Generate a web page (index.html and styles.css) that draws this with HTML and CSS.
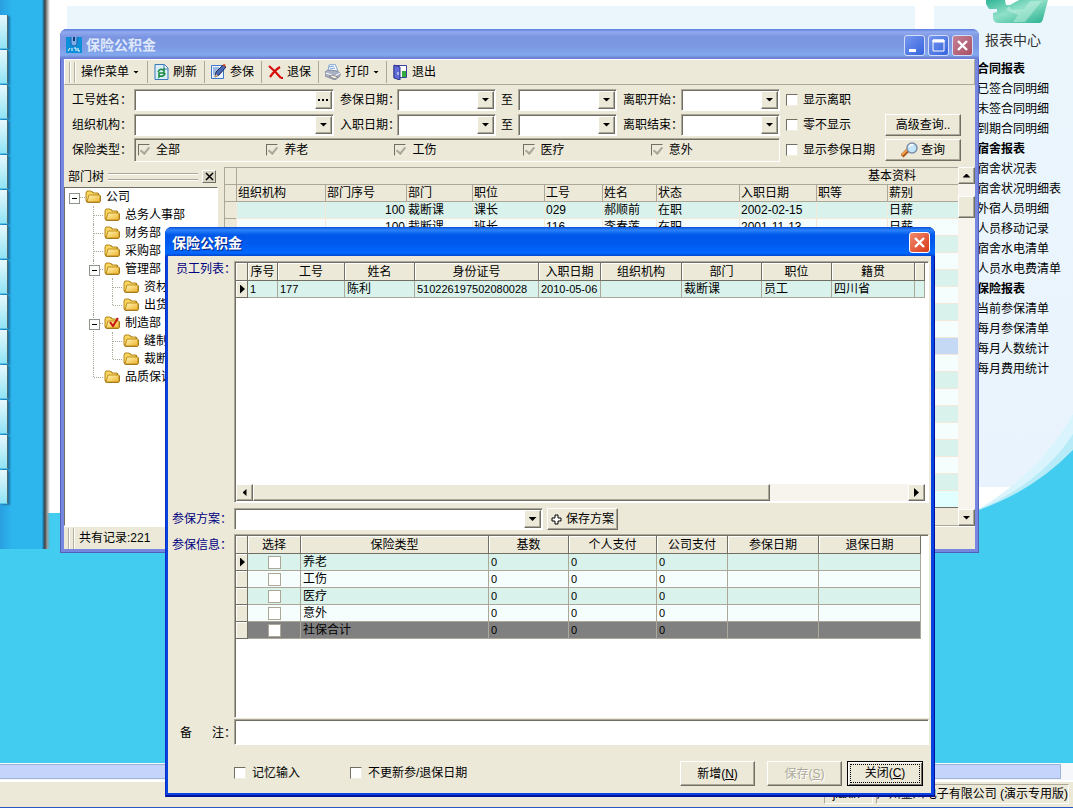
FILE: index.html
```html
<!DOCTYPE html>
<html lang="zh-CN">
<head>
<meta charset="utf-8">
<title>保险公积金</title>
<link rel="stylesheet" href="styles.css">
</head>
<body>
<svg class="defs" aria-hidden="true">
  <defs>
    <linearGradient id="gold" x1="0" y1="0" x2="1" y2="1"><stop offset="0" stop-color="#fff6b8"/><stop offset="1" stop-color="#eeb32c"/></linearGradient>
    <linearGradient id="teal" x1="0" y1="0" x2="1" y2="1"><stop offset="0" stop-color="#2fb596"/><stop offset=".45" stop-color="#8fe0c8"/><stop offset="1" stop-color="#27b08e"/></linearGradient>
    <symbol id="folder" viewBox="0 0 17 14">
      <path d="M1 12V3l2-2h4l2 2h5v2l2 1v5l-2 2H3z" fill="#8a6a1c"/>
      <path d="M1 3l1-2h4l2 2h5v8H1z" fill="#f7d55e" stroke="#b5871c"/>
      <path d="M4 5h11v7H2z" fill="url(#gold)" stroke="#c08d1d"/>
    </symbol>
  </defs>
</svg>
<div class="desktop">
  <main class="workspace">
    <nav class="strip"><i></i><i></i><i></i><i></i><i></i><i></i><i></i><i></i><i></i><i></i><i></i><i></i><i></i><i></i></nav>
    <div class="pane"></div>
    <aside class="reports">
      <svg class="logo" width="66" height="26" viewBox="0 0 66 26"><path d="M1 0h62l-5 19q-1 4-4 4H14q-6 0-6-6v-4l4-1v-3H4L1 4z" fill="url(#teal)"/><path d="M20 0h14l-9 5h-4z" fill="#fff"/><path d="M24 6l3 4 12-1 6-8h12L40 22H28l5-7-12-5z" fill="#c4f1e2" opacity=".5"/></svg>
      <h2>报表中心</h2>
      <ul>
        <li><b>合同报表</b></li><li>已签合同明细</li><li>未签合同明细</li><li>到期合同明细</li>
        <li><b>宿舍报表</b></li><li>宿舍状况表</li><li>宿舍状况明细表</li><li>外宿人员明细</li><li>人员移动记录</li><li>宿舍水电清单</li><li>人员水电费清单</li>
        <li><b>保险报表</b></li><li>当前参保清单</li><li>每月参保清单</li><li>每月人数统计</li><li>每月费用统计</li>
      </ul>
    </aside>
    <svg class="wave" width="100" height="113" viewBox="0 0 100 113"><path d="M0 88h60L0 113z" fill="#fff"/><path d="M100 14Q66 75 0 112h100z" fill="#d9f4fc"/><path d="M100 34Q68 84 0 112h100z" fill="#b8ebf8"/><path d="M100 50Q58 93 0 112v1h100z" fill="#42ccf0"/></svg>
  </main>
  <div class="desk-scroll"><i></i></div>
  <footer class="desk-status"><span class="slot">jiaxin</span><span class="slot company">广州金川电子有限公司 (演示专用版)</span></footer>

  <section class="window">
    <header class="titlebar">
      <svg width="16" height="16" viewBox="0 0 16 16"><path fill="#0b8fd8" d="M0 0h16v16H0z"/><path d="M5 0v6q0 3 3 3t3-3V0" fill="#7eaee6" stroke="#2563b5"/><path d="M7 0h2v4H7z" fill="#123a78"/><path d="M2 14l2-3M6 11v3M8 11h2v3M12 11v3h2" stroke="#fff" fill="none"/></svg>
      <h1>保险公积金</h1>
      <button class="cap" aria-label="最小化"><svg width="19" height="19"><path d="M4 13h7v3H4z" fill="#fff"/></svg></button>
      <button class="cap" aria-label="最大化"><svg width="19" height="19"><path d="M4 4h11v11H4z" fill="none" stroke="#fff"/><path d="M4 4h11v2H4z" fill="#fff" stroke="#fff"/></svg></button>
      <button class="cap shut" aria-label="关闭"><svg width="19" height="19"><path d="M5 5l9 9M14 5l-9 9" stroke="#fff" stroke-width="2.4"/></svg></button>
    </header>
    <div class="toolbar">
      <i class="grip"></i>
      <button class="tool first">操作菜单<i class="tri"></i></button>
      <button class="tool"><svg width="15" height="16" viewBox="0 0 15 16"><path d="M1 .5h9.500l3.500 3.500v11.500H1z" fill="#d9edfb" stroke="#3a78b8"/><path d="M10 1v4h4" fill="#fff" stroke="#3a78b8"/><path d="M4 8q2-4 5-2l1-1v4H7M11 9q-1 4-5 3l-1 1v-4h3" fill="none" stroke="#178a3a" stroke-width="1.500"/></svg>刷新</button>
      <button class="tool"><svg width="15" height="16" viewBox="0 0 15 16"><path d="M.5 1.500h12v13H.5z" fill="#eaf3ff" stroke="#3f77c8"/><path d="M2 4h6M2 6h5M2 8h4M2 10h3" stroke="#4a7cc4"/><path d="M4 13l1-5 7-7 3 2-7 8z" fill="#4a68b4" stroke="#1d2c55"/><path d="M11 1l3-1 1 3z" fill="#e34a20"/><path d="M4 13l1-3 2 2z" fill="#f5c878"/></svg>参保</button>
      <button class="tool"><svg width="15" height="16" viewBox="0 0 15 16"><path d="M1 2q6 5 12 12M12 3Q7 6 2 13" stroke="#d80b0b" stroke-width="2.200" fill="none"/><path d="M13 13h2v2h-2z" fill="#d80b0b"/></svg>退保</button>
      <button class="tool"><svg width="16" height="16" viewBox="0 0 16 16"><path d="M3 7l1-6 6-1 3 7z" fill="#f7fbff" stroke="#84a8d0"/><path d="M4 3l5-1M5 5l5-1" stroke="#74a2dc"/><path d="M0 8l3-2 9 1 3 2v3l-5 4-10-4z" fill="#a9b1c4" stroke="#868da0"/><path d="M1 9l9 3 5-3" stroke="#fff" fill="none"/><path d="M4 12l6 3 3-2-6-2z" fill="#f6f6ee" stroke="#888"/></svg>打印<i class="tri"></i></button>
      <button class="tool"><svg width="15" height="16" viewBox="0 0 15 16"><path d="M1 1.500h12.500v12H1z" fill="#fff" stroke="#3b3f9f"/><path d="M9 7h4v6H9z" fill="#32ad3c"/><path d="M1 1l6 2v13l-6-2z" fill="#5f6bd6" stroke="#30348c"/><path d="M5 8v3" stroke="#fff"/></svg>退出</button>
    </div>

    <form class="filters">
      <label for="f1">工号姓名：</label>
      <span class="field"><input id="f1"><button type="button" class="arrow" aria-label="浏览"><svg width="11" height="2"><path d="M0 0h2v2H0zM4 0h2v2H4zM8 0h2v2H8z"/></svg></button></span>
      <label for="f2" class="tight">参保日期：</label>
      <span class="field"><select id="f2"><option></option></select><i class="arrow"><i class="tri"></i></i></span>
      <label for="f3" class="mid">至</label>
      <span class="field"><select id="f3"><option></option></select><i class="arrow"><i class="tri"></i></i></span>
      <label for="f4" class="tight">离职开始：</label>
      <span class="field"><select id="f4"><option></option></select><i class="arrow"><i class="tri"></i></i></span>
      <label class="check side wide"><input type="checkbox">显示离职</label>

      <label for="f5">组织机构：</label>
      <span class="field"><select id="f5"><option></option></select><i class="arrow"><i class="tri"></i></i></span>
      <label for="f6" class="tight">入职日期：</label>
      <span class="field"><select id="f6"><option></option></select><i class="arrow"><i class="tri"></i></i></span>
      <label for="f7" class="mid">至</label>
      <span class="field"><select id="f7"><option></option></select><i class="arrow"><i class="tri"></i></i></span>
      <label for="f8" class="tight">离职结束：</label>
      <span class="field"><select id="f8"><option></option></select><i class="arrow"><i class="tri"></i></i></span>
      <label class="check side"><input type="checkbox">零不显示</label>
      <button type="button" class="btn">高级查询..</button>

      <span>保险类型：</span>
      <div class="types">
        <label class="check"><input type="checkbox" checked disabled>全部</label>
        <label class="check"><input type="checkbox" checked disabled>养老</label>
        <label class="check"><input type="checkbox" checked disabled>工伤</label>
        <label class="check"><input type="checkbox" checked disabled>医疗</label>
        <label class="check"><input type="checkbox" checked disabled>意外</label>
      </div>
      <label class="check side"><input type="checkbox">显示参保日期</label>
      <button type="button" class="btn"><svg width="18" height="16" viewBox="0 0 18 16"><path d="M1 14l6-6" stroke="#a8541c" stroke-width="4"/><path d="M1 13l6-6" stroke="#f0a24a" stroke-width="2"/><circle cx="11" cy="6" r="5" fill="#c3e6fb" stroke="#7d8fa8" stroke-width="1.500"/><path d="M8 5q1-3 4-2" stroke="#fff" stroke-width="1.500" fill="none"/></svg>查询</button>
    </form>

    <div class="split">
      <div class="tree">
        <div class="tree-head"><span>部门树</span><i class="lines"></i><button aria-label="关闭部门树"><svg width="9" height="9"><path d="M1 1l7 7M8 1L1 8" stroke="#000" stroke-width="1.500"/></svg></button></div>
        <ul class="root">
          <li class="open"><div><svg><use href="#folder"/></svg>公司</div>
            <ul>
              <li><div><svg><use href="#folder"/></svg>总务人事部</div></li>
              <li><div><svg><use href="#folder"/></svg>财务部</div></li>
              <li><div><svg><use href="#folder"/></svg>采购部</div></li>
              <li class="open"><div><svg><use href="#folder"/></svg>管理部</div>
                <ul><li><div><svg><use href="#folder"/></svg>资材课</div></li><li><div><svg><use href="#folder"/></svg>出货课</div></li></ul></li>
              <li class="open"><div><svg><use href="#folder"/><path d="M6 6l3 4 5-8" fill="none" stroke="#c81414" stroke-width="2"/></svg>制造部</div>
                <ul><li><div><svg><use href="#folder"/></svg>缝制课</div></li><li><div><svg><use href="#folder"/></svg>裁断课</div></li></ul></li>
              <li><div><svg><use href="#folder"/></svg>品质保证部</div></li>
            </ul>
          </li>
        </ul>
      </div>
      <div class="records">
        <div class="sheet">
          <table>
            <colgroup><col class="w12"><col class="w89"><col class="w81"><col class="w66"><col class="w72"><col class="w58"><col class="w54"><col class="w83"><col class="w77"><col class="w71"><col></colgroup>
            <thead>
              <tr><th></th><th colspan="10" class="group">基本资料</th></tr>
              <tr><th></th><th>组织机构</th><th>部门序号</th><th>部门</th><th>职位</th><th>工号</th><th>姓名</th><th>状态</th><th>入职日期</th><th>职等</th><th>薪别</th></tr>
            </thead>
            <tbody>
              <tr><th></th><td></td><td class="num">100</td><td>裁断课</td><td>课长</td><td>029</td><td>郝顺前</td><td>在职</td><td>2002-02-15</td><td></td><td>日薪</td></tr>
              <tr><th></th><td></td><td class="num">100</td><td>裁断课</td><td>班长</td><td>116</td><td>李春莲</td><td>在职</td><td>2001-11-13</td><td></td><td>日薪</td></tr>
              <tr><th></th><td colspan="10"></td></tr><tr><th></th><td colspan="10"></td></tr>
              <tr><th></th><td colspan="10"></td></tr><tr><th></th><td colspan="10"></td></tr>
              <tr><th></th><td colspan="10"></td></tr><tr><th></th><td colspan="10"></td></tr>
              <tr class="picked"><th></th><td colspan="10"></td></tr><tr><th></th><td colspan="10"></td></tr>
              <tr><th></th><td colspan="10"></td></tr><tr><th></th><td colspan="10"></td></tr>
              <tr><th></th><td colspan="10"></td></tr><tr><th></th><td colspan="10"></td></tr>
              <tr><th></th><td colspan="10"></td></tr><tr><th></th><td colspan="10"></td></tr>
              <tr><th></th><td colspan="10"></td></tr><tr class="last"><th></th><td colspan="10"></td></tr>
            </tbody>
          </table>
        </div>
        <div class="vscroll"><i class="sb"><i class="tri up"></i></i><i class="thumb"></i><i class="sb"><i class="tri"></i></i></div>
      </div>
    </div>
    <footer class="statusbar"><i class="grip"></i>共有记录:221</footer>
  </section>

  <section class="dialog" role="dialog" aria-labelledby="dlg">
    <header class="dlg-title"><h1 id="dlg">保险公积金</h1><button class="cap shut" aria-label="关闭"><svg width="19" height="19"><path d="M5 5l9 9M14 5l-9 9" stroke="#fff" stroke-width="2.400"/></svg></button></header>
    <form class="dlg-body">
      <span class="navy right">员工列表：</span>
      <div class="box staff">
        <table class="grid">
          <colgroup><col class="w12"><col class="w30"><col class="w67"><col class="w70"><col class="w124"><col class="w62"><col class="w81"><col class="w80"><col class="w70"><col class="w83"><col></colgroup>
          <thead><tr><th></th><th>序号</th><th>工号</th><th>姓名</th><th>身份证号</th><th>入职日期</th><th>组织机构</th><th>部门</th><th>职位</th><th>籍贯</th><th></th></tr></thead>
          <tbody><tr><th><i class="tri rt"></i></th><td>1</td><td>177</td><td>陈利</td><td>510226197502080028</td><td>2010-05-06</td><td></td><td>裁断课</td><td>员工</td><td>四川省</td><td></td></tr></tbody>
        </table>
        <div class="hscroll"><i class="sb"><i class="tri lt"></i></i><i class="track"><i class="thumb"></i></i><i class="sb"><i class="tri rt"></i></i></div>
      </div>

      <label for="plan" class="navy">参保方案：</label>
      <div class="plan"><span class="field"><select id="plan"><option></option></select><i class="arrow"><i class="tri"></i></i></span><button type="button" class="btn save"><svg width="11" height="11"><path d="M4 1h3v3h3v3H7v3H4V7H1V4h3z" fill="#fff" stroke="#000"/></svg>保存方案</button></div>

      <span class="navy low">参保信息：</span>
      <div class="box info">
        <table class="grid">
          <colgroup><col class="w12"><col class="w53"><col><col class="w80"><col class="w88"><col class="w71"><col class="w91"><col class="w102"></colgroup>
          <thead><tr><th></th><th>选择</th><th>保险类型</th><th>基数</th><th>个人支付</th><th>公司支付</th><th>参保日期</th><th>退保日期</th></tr></thead>
          <tbody>
            <tr><th><i class="tri rt"></i></th><td class="pick"><input type="checkbox" aria-label="养老"></td><td>养老</td><td>0</td><td>0</td><td>0</td><td></td><td></td></tr>
            <tr><th></th><td class="pick"><input type="checkbox" aria-label="工伤"></td><td>工伤</td><td>0</td><td>0</td><td>0</td><td></td><td></td></tr>
            <tr><th></th><td class="pick"><input type="checkbox" aria-label="医疗"></td><td>医疗</td><td>0</td><td>0</td><td>0</td><td></td><td></td></tr>
            <tr><th></th><td class="pick"><input type="checkbox" aria-label="意外"></td><td>意外</td><td>0</td><td>0</td><td>0</td><td></td><td></td></tr>
            <tr class="total"><th></th><td class="pick"><input type="checkbox" aria-label="社保合计"></td><td>社保合计</td><td>0</td><td>0</td><td>0</td><td></td><td></td></tr>
          </tbody>
        </table>
      </div>

      <label for="memo" class="memo"><span>备</span><span>注：</span></label>
      <input id="memo" class="box">

      <div class="actions">
        <label class="check"><input type="checkbox">记忆输入</label>
        <label class="check"><input type="checkbox">不更新参/退保日期</label>
        <span class="grow"></span>
        <button type="button" class="btn">新增(<u>N</u>)</button>
        <button type="button" class="btn" disabled>保存(<u>S</u>)</button>
        <button type="button" class="btn focus"><span>关闭(<u>C</u>)</span></button>
      </div>
    </form>
  </section>
</div>
</body>
</html>
```
FILE: styles.css
```css
* { box-sizing: border-box; }
body {
  margin: 0;
  font: 12px/16px "Liberation Sans", "Noto Sans CJK SC", sans-serif;
  color: #000;
  white-space: nowrap;
}
h1, h2, ul { margin: 0; padding: 0; list-style: none; }
button, input, select { font: inherit; color: inherit; margin: 0; padding: 0; border: 0; border-radius: 0; background: none; appearance: none; }
svg { display: block; flex: none; }
i { font-style: normal; }
.defs { position: absolute; width: 0; height: 0; }

/* desktop */
.desktop { position: relative; height: 100vh; overflow: hidden; display: flex; flex-direction: column; background: #ece9d8; }
.workspace { position: relative; flex: 1; display: flex; align-items: flex-start; background: linear-gradient(#fff 513px, #42ccf0 513px); }
.strip {
  width: 50px; height: 549px; padding-top: 15px;
  background: linear-gradient(90deg, #2a9fe0, #2db6ee 12px 42px, #1e7fae 43px, #444 45px, #999 47px, transparent 50px);
}
.strip i { display: block; width: 8px; height: 34px; margin-bottom: 1px; background: linear-gradient(#e8f8fd, #8fe3f5); border-right: 1px solid #4b6a6c; border-bottom: 1px solid #58c3e6; box-shadow: 2px 1px 2px #2274a4; }
.pane { flex: 1; height: 481px; margin: 6px 19px 0 17px; background: #eaf5fc; }
.reports { width: 139px; height: 481px; margin-top: 6px; padding-left: 43px; background: linear-gradient(#eaf6fc, #e9f3fd); }
.logo { margin: -6px 0 0 8px; }
.reports h2 { margin: 4px 0 9px 8px; font-size: 14px; line-height: 20px; font-weight: 400; color: #333; }
.reports li { line-height: 20px; }
.wave { position: absolute; right: 0; top: 400px; }
.desk-scroll { height: 19px; padding: 1px 12px 2px 0; background: #f5f7fa; border-bottom: 2px solid #fff; }
.desk-scroll i { display: block; height: 15px; border: 1px solid #9db4d8; border-left: 0; background: #c5d4fb; }
.desk-status { height: 26px; padding: 2px 4px 3px; display: flex; justify-content: flex-end; gap: 3px; border-bottom: 1px solid #2b57c0; }
.slot { width: 49px; padding: 0 4px 0 8px; line-height: 18px; border: 1px solid #aca899; border-color: #aca899 #fff #fff #aca899; }
.company { width: auto; padding: 0; }

/* shared parts */
.tri { display: block; width: 8px; height: 4px; background: #000; clip-path: polygon(0 0, 100% 0, 50% 100%); }
.tri.up { clip-path: polygon(50% 0, 100% 100%, 0 100%); }
.tri.rt { width: 5px; height: 9px; clip-path: polygon(0 0, 100% 50%, 0 100%); }
.tri.lt { width: 4px; height: 7px; clip-path: polygon(100% 0, 100% 100%, 0 50%); }
.grip { width: 6px; height: 21px; border: 1px solid #b5b19f; border-width: 0 1px; box-shadow: inset 1px 0 #fff, 1px 0 #fff; }
.arrow, .sb, .thumb, .btn {
  background: #ece9d8; border: 1px solid; border-color: #fff #716f64 #716f64 #fff; box-shadow: inset -1px -1px #aca899;
}
.arrow { width: 17px; display: flex; align-items: center; justify-content: center; }
.sb { flex: none; width: 17px; height: 17px; display: flex; align-items: center; justify-content: center; }
.field, .box { border: 1px solid; border-color: #aca899 #fff #fff #aca899; box-shadow: inset 1px 1px #716f64; background: #fff; }
.field { display: flex; height: 22px; padding: 1px; min-width: 0; }
.field input, .field select { flex: 1; min-width: 0; width: 0; }
.btn { height: 22px; display: flex; align-items: center; justify-content: center; gap: 2px; }
.check { display: flex; align-items: center; gap: 6px; }
.check input { width: 12px; height: 12px; flex: none; background: #fff; border: 1px solid; border-color: #716f64 #f1efe2 #f1efe2 #716f64; }
.check input:disabled { background: #ece9d8; }
.check input:checked::before { content: ""; display: block; width: 4px; height: 7px; margin: 0 0 0 3px; border: solid #aca899; border-width: 0 2px 2px 0; transform: rotate(40deg); }

/* main window */
.window {
  position: absolute; left: 60px; top: 29px; right: 94px; bottom: 255px;
  display: flex; flex-direction: column; padding: 0 4px 4px;
  border-radius: 7px 7px 0 0; background: #7587de; box-shadow: inset 1px 0 #5560bd, inset -1px -1px #5560bd;
}
.titlebar { height: 30px; flex: none; margin: 0 -4px; padding: 2px 6px 0; display: flex; align-items: center; gap: 2px; border-radius: 7px 7px 0 0; background: linear-gradient(#5d7ddd, #91a9ee 3px, #7b95e1 8px, #7c99e4 18px, #83a9ed 26px, #6d80d4 29px); }
.titlebar h1, .dlg-title h1 { flex: 1; font-size: 14px; line-height: 20px; }
.titlebar h1 { color: #dfe8fb; margin-left: 2px; }
.cap { width: 21px; height: 21px; border: 1px solid #d4def8; border-radius: 3px; background: linear-gradient(135deg, #7697ee, #3564dd); margin-left: 1px; }
.cap.shut { background: linear-gradient(135deg, #c58295, #a94f65); }
.toolbar { height: 26px; flex: none; display: flex; align-items: center; padding-left: 4px; background: #ece9d8; border: 1px solid; border-color: #fff #aca899 #aca899 #fff; }
.tool { height: 22px; display: flex; align-items: center; gap: 4px; padding: 0 7px 0 6px; border-left: 1px solid #aca899; }
.tool.first { border: 0; padding-right: 8px; }
.toolbar .tri { width: 6px; height: 3px; }
.filters {
  flex: none; display: grid; background: #ece9d8; padding: 2px 14px 4px 0;
  grid-template-columns: 70px 200px 63px 99px 22px 99px 64px 99px 1fr 76px;
  grid-auto-rows: 25px; align-items: center;
}
.filters > label:not(.tight):not(.mid):not(.check), .filters > span:not(.field) { padding-left: 8px; }
.tight { padding-left: 6px; width: 0; }
.mid { text-align: center; }
.side { padding-left: 6px; gap: 5px; }
.wide { grid-column: span 2; }
.types { grid-column: 2 / 9; height: 24px; padding-left: 3px; display: grid; grid-template-columns: repeat(5, 1fr); border: 1px solid; border-color: #aca899 #fff #fff #aca899; box-shadow: inset 1px 1px #716f64; }
.split { flex: 1; min-height: 0; display: flex; gap: 6px; background: #ece9d8; }
.tree { width: 154px; display: flex; flex-direction: column; }
.tree-head { height: 21px; flex: none; display: flex; align-items: center; gap: 4px; padding: 0 2px 0 4px; }
.lines { flex: 1; height: 7px; border: 1px solid #aca899; border-width: 1px 0; box-shadow: 0 1px #fff, inset 0 1px #fff; }
.tree-head button { width: 14px; height: 13px; display: grid; place-items: center; background: #d8d4c4; border: 1px solid; border-color: #fff #716f64 #716f64 #fff; }
.root { flex: 1; padding: 0 0 0 4px; overflow: hidden; background: #fff; border: 1px solid #716f64; border-color: #716f64 #fff #fff #716f64; }
.tree li { position: relative; padding-left: 16px; }
.tree li li { padding-left: 19px; }
.tree li ul { margin-left: 0; }
.tree li div { height: 18px; display: flex; align-items: center; gap: 4px; }
.tree li svg { width: 17px; height: 14px; }
.tree li ul li::before { content: ""; position: absolute; left: 8px; top: 0; height: 100%; border-left: 1px dotted #aca899; }
.tree li ul li:last-child::before { height: 9px; }
.tree li::after { content: ""; position: absolute; left: 9px; top: 9px; width: 9px; border-top: 1px dotted #aca899; }
.tree li.open > div::before { content: ""; position: absolute; z-index: 1; left: 4px; top: 5px; width: 9px; height: 9px; border: 1px solid #8c9489; background: linear-gradient(#000, #000) center / 5px 1px no-repeat #fff; }
.tree .root > li.open > div::before { left: 0; }
.records { flex: 1; min-width: 0; display: flex; padding-top: 1px; }
.sheet { flex: 1; overflow: hidden; border-top: 1px solid #aca899; border-bottom: 1px solid #aca899; }
table { width: 100%; table-layout: fixed; border-collapse: collapse; }
th, td { padding: 0 3px; height: 17px; line-height: 16px; overflow: hidden; text-align: left; font-weight: 400; }
.sheet table { border-collapse: separate; border-spacing: 0; }
.sheet th { border: 1px solid #aca899; border-width: 0 0 1px 1px; background: #ece9d8; padding: 0 1px; }
.sheet th.group { text-align: right; padding-right: 42px; }
.sheet td { border: 1px solid #f4e8d8; border-width: 0 0 1px 1px; background: #f6fdfd; padding: 0 1px; }
.sheet tbody tr:nth-child(odd) td { background: #daf2ec; }
.sheet tbody tr.picked td { background: #c6d9f4; }
.sheet tbody tr.last td { background: #e0fffe; border-bottom-color: #716f64; }
.sheet td.num { text-align: right; }
.vscroll { width: 17px; display: flex; flex-direction: column; background: #f6f4ec; }
.vscroll .thumb { height: 22px; margin: 12px 0 auto; }
.statusbar { height: 23px; flex: none; display: flex; align-items: center; gap: 5px; padding-left: 4px; background: #ece9d8; border-top: 1px solid #fff; }

/* dialog */
.dialog {
  position: absolute; left: 165px; top: 227px; right: 138px; bottom: 11px;
  display: flex; flex-direction: column; padding: 0 4px 4px 3px;
  border-radius: 7px 7px 0 0; background: #0842e0; box-shadow: inset 1px 0 #0a2fc4, inset -1px -2px #00139c;
}
.dlg-title { height: 29px; flex: none; margin: 0 -4px 0 -3px; padding: 2px 5px 0 7px; display: flex; align-items: center; border-radius: 7px 7px 0 0; color: #fff; text-shadow: 1px 1px #0a1f80; background: linear-gradient(#0a4fd4, #2c83fb 3px, #0058ea 8px, #0059ee 16px, #0068ff 26px, #0046cc 29px); }
.dlg-title .cap.shut { background: linear-gradient(135deg, #f08b6c, #d8391a); border-color: #fff; }
.dlg-body {
  flex: 1; min-height: 0; display: grid; padding: 5px 2px 7px 0; background: #ece9d8;
  grid-template-columns: 66px 1fr; grid-template-rows: 242px 31px minmax(0, 1fr) 26px 41px;
}
.navy { color: #000080; padding-left: 4px; width: 0; }
.navy.right { padding-left: 8px; }
.navy.low { padding-top: 3px; }
label.navy { padding-top: 8px; }
.info { margin-bottom: 1px; }
.box { min-width: 0; display: flex; flex-direction: column; padding: 1px 3px 1px 1px; }
.staff { justify-content: space-between; }
.grid { border-collapse: separate; border-spacing: 0; }
.grid th { height: 18px; background: #ece9d8; border: 1px solid #716f64; border-width: 0 1px 1px 0; box-shadow: inset 1px 1px #fff; text-align: center; padding: 0; }
.grid tbody th { height: 17px; padding-left: 4px; }
.grid td { border: 1px solid #aca899; border-width: 0 1px 1px 0; background: #f6fdfd; padding: 0 2px; font-size: 11px; }
.grid tbody tr:nth-child(odd) td { background: #daf2ec; }
.grid tbody tr.total td { background: #808080; }
.staff td:nth-child(n+8), .staff td:nth-child(4), .info td:nth-child(3) { font-size: 12px; }
.info .grid { flex: none; width: calc(100% - 4px); }
.pick input { display: block; width: 13px; height: 13px; margin: 0 auto; background: #fff; border: 1px solid #aca899; }
.hscroll { display: flex; background: #f6f4ec; }
.track { flex: 1; display: flex; }
.track .thumb { width: 79%; height: 17px; }
.plan { display: flex; gap: 4px; padding-top: 5px; }
.plan .field { width: 309px; }
.plan .btn { gap: 4px; width: 71px; }
.memo { display: flex; justify-content: space-between; align-items: center; padding: 2px 0 0 12px; margin-right: -2px; }
.actions { grid-column: 1 / 3; display: flex; align-items: flex-end; padding: 0 6px 0 66px; }
.actions .check { height: 26px; margin-right: 50px; }
.actions .grow { flex: 1; }
.actions .btn { width: 75px; height: 25px; margin-left: 12px; gap: 0; }
.actions .btn:disabled { color: #aca899; text-shadow: 1px 1px #fff; }
.actions .focus { width: 76px; margin-left: 5px; padding: 2px; border-color: #000; box-shadow: inset 1px 1px #fff, inset -1px -1px #716f64; }
.focus span { flex: 1; line-height: 17px; border: 1px dotted #000; text-align: center; }

/* column widths */
.w12 { width: 12px; } .w30 { width: 30px; } .w53 { width: 53px; } .w54 { width: 54px; }
.w58 { width: 58px; } .w62 { width: 62px; } .w66 { width: 66px; } .w67 { width: 67px; }
.w70 { width: 70px; } .w71 { width: 71px; } .w72 { width: 72px; } .w77 { width: 77px; }
.w80 { width: 80px; } .w81 { width: 81px; } .w83 { width: 83px; } .w88 { width: 88px; }
.w89 { width: 89px; } .w91 { width: 91px; } .w102 { width: 102px; } .w124 { width: 124px; }
```
